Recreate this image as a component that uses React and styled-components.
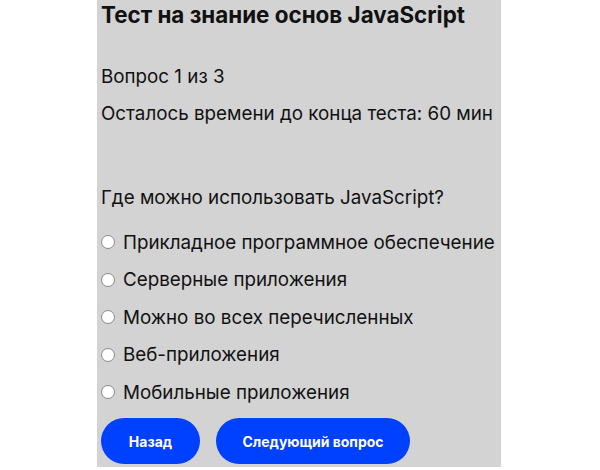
import React from "react";
import styled, { createGlobalStyle } from "styled-components";

const Global = createGlobalStyle`
  html, body { margin: 0; padding: 0; background: #ffffff; }
  body { font-family: Inter, "Noto Sans", sans-serif; color: #111; }
`;

const Panel = styled.div`
  width: 404px;
  height: 467px;
  margin-left: 97px;
  background: #d3d3d3;
  padding-left: 4px;
  box-sizing: border-box;
  display: flex;
  flex-direction: column;
`;

const Title = styled.h1`
  margin: 0;
  font-size: 22.4px;
  line-height: 30px;
  font-weight: 700;
  color: #111;
`;

const Info = styled.p`
  margin: ${(p) => p.$top}px 0 0;
  font-size: 18.8px;
  line-height: 37px;
`;

const Options = styled.div`
  margin-top: 8px;
  display: flex;
  flex-direction: column;
`;

const Option = styled.label`
  display: flex;
  align-items: center;
  height: 37.5px;
  font-size: 18.8px;
  gap: 8px;
`;

const Radio = styled.input`
  appearance: none;
  margin: 0;
  width: 14px;
  height: 14px;
  border-radius: 50%;
  border: 1px solid #8a8a8a;
  background: #fff;
  box-sizing: border-box;
  flex: none;
`;

const Buttons = styled.div`
  display: flex;
  gap: 16px;
  margin-top: 7px;
`;

const Button = styled.button`
  width: ${(p) => p.$w}px;
  height: 46px;
  border: none;
  border-radius: 23px;
  background: #0040ff;
  color: #fff;
  font-family: Inter, "Noto Sans", sans-serif;
  font-size: 14px;
  font-weight: 700;
  cursor: pointer;
`;

const options = [
  "Прикладное программное обеспечение",
  "Серверные приложения",
  "Можно во всех перечисленных",
  "Веб-приложения",
  "Мобильные приложения",
];

export default function App() {
  return (
    <>
      <Global />
      <Panel>
        <Title>Тест на знание основ JavaScript</Title>
        <Info $top={27.5}>Вопрос 1 из 3</Info>
        <Info $top={0}>Осталось времени до конца теста: 60 мин</Info>
        <Info $top={47}>Где можно использовать JavaScript?</Info>
        <Options>
          {options.map((o) => (
            <Option key={o}>
              <Radio type="radio" name="q" />
              {o}
            </Option>
          ))}
        </Options>
        <Buttons>
          <Button $w={99}>Назад</Button>
          <Button $w={194}>Следующий вопрос</Button>
        </Buttons>
      </Panel>
    </>
  );
}
